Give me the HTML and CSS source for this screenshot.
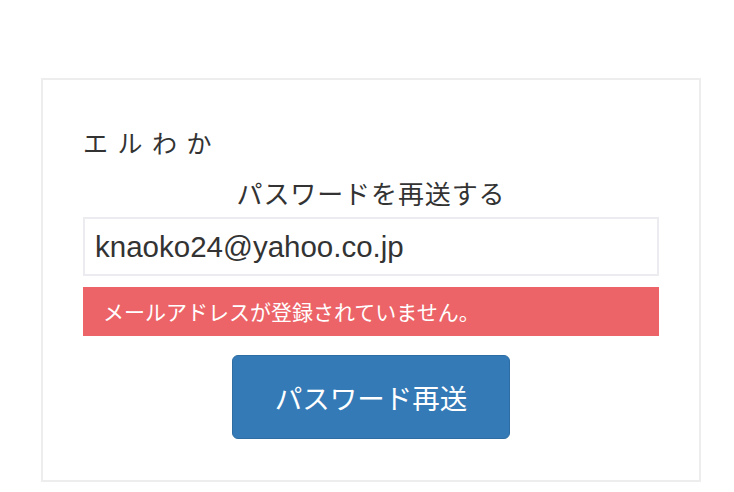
FILE: index.html
```html
<!DOCTYPE html>
<html lang="ja">
<head>
<meta charset="utf-8">
<title>パスワードを再送する</title>
<link rel="stylesheet" href="styles.css">
</head>
<body>
<div class="card">
  <div class="brand">エルわか</div>
  <div class="heading">パスワードを再送する</div>
  <input class="email" type="text" value="knaoko24@yahoo.co.jp">
  <div class="alert">メールアドレスが登録されていません。</div>
  <div class="actions">
    <button class="btn" type="button">パスワード再送</button>
  </div>
</div>
</body>
</html>
```
FILE: styles.css
```css
html, body {
  margin: 0;
  padding: 0;
  background: #ffffff;
}
body {
  font-family: "Liberation Sans", "Noto Sans CJK JP", sans-serif;
  color: #333333;
}
.card {
  box-sizing: border-box;
  width: 660px;
  margin: 78px 0 0 41px;
  border: 2px solid #ededed;
  padding: 45px 40px 41px 40px;
  display: flex;
  flex-direction: column;
}
.brand {
  font-family: "Noto Sans CJK JP", sans-serif;
  font-size: 25px;
  line-height: 34px;
  letter-spacing: 9.5px;
  height: 34px;
}
.heading {
  font-family: "Noto Sans CJK JP", sans-serif;
  font-size: 26px;
  line-height: 34px;
  letter-spacing: 0.9px;
  text-align: center;
  margin-top: 17px;
}
.email {
  box-sizing: border-box;
  margin: 7px 0 0 0;
  width: 100%;
  height: 59px;
  border: 2px solid #ececf0;
  padding: 0 10px;
  font-family: "Liberation Sans", sans-serif;
  font-size: 29.5px;
  color: #333333;
  background: #ffffff;
  outline: none;
}
.alert {
  box-sizing: border-box;
  margin-top: 11px;
  height: 49px;
  background: #ec6468;
  color: #ffffff;
  font-family: "Noto Sans CJK JP", sans-serif;
  font-size: 21px;
  line-height: 49px;
  padding-left: 20px;
}
.actions {
  display: flex;
  justify-content: center;
  margin-top: 19px;
}
.btn {
  box-sizing: border-box;
  width: 278px;
  height: 84px;
  background: #337ab7;
  border: 1px solid #2e6da4;
  border-radius: 6px;
  color: #ffffff;
  font-family: "Noto Sans CJK JP", sans-serif;
  font-size: 27.5px;
  padding: 0;
}
```
